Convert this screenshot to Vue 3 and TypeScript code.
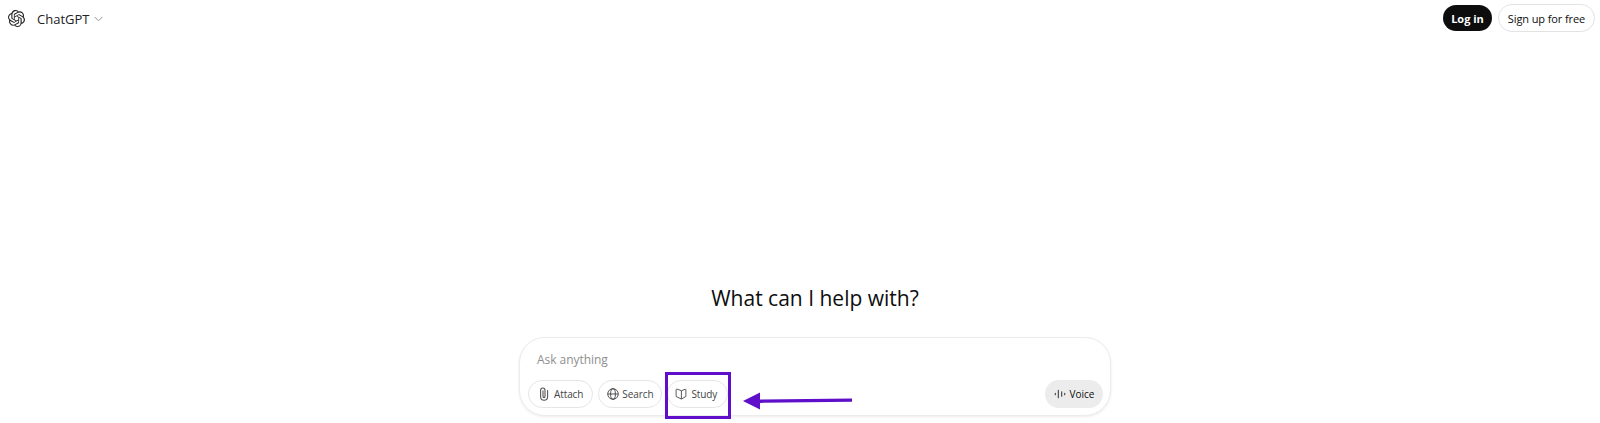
<script setup lang="ts">
const tools = ['Attach', 'Search', 'Study'] as const
</script>

<template>
  <div class="page">
    <header class="top">
      <div class="brand">
        <svg class="logo" width="17" height="17" viewBox="0 0 24 24" fill="#222"><path d="M22.28 9.82a5.98 5.98 0 0 0-.52-4.91 6.05 6.05 0 0 0-6.51-2.9A6.07 6.07 0 0 0 4.98 4.18a5.98 5.98 0 0 0-4 2.9 6.05 6.05 0 0 0 .74 7.1 5.98 5.98 0 0 0 .51 4.91 6.05 6.05 0 0 0 6.52 2.9A5.98 5.98 0 0 0 13.26 24a6.06 6.06 0 0 0 5.77-4.21 5.99 5.99 0 0 0 4-2.9 6.06 6.06 0 0 0-.75-7.07zM13.26 22.43a4.48 4.48 0 0 1-2.88-1.04l.14-.08 4.78-2.76a.79.79 0 0 0 .39-.68v-6.74l2.02 1.17a.07.07 0 0 1 .04.05v5.58a4.5 4.5 0 0 1-4.49 4.5zM3.6 18.3a4.47 4.47 0 0 1-.54-3.01l.14.09 4.78 2.76a.77.77 0 0 0 .78 0l5.84-3.37v2.33a.08.08 0 0 1-.03.06l-4.83 2.79a4.5 4.5 0 0 1-6.14-1.65zM2.34 7.9a4.49 4.49 0 0 1 2.37-1.97v5.67a.77.77 0 0 0 .39.68l5.81 3.35-2.02 1.17a.08.08 0 0 1-.07 0l-4.83-2.79A4.5 4.5 0 0 1 2.34 7.87zm16.6 3.86-5.84-3.39 2.02-1.16a.08.08 0 0 1 .07 0l4.83 2.79a4.49 4.49 0 0 1-.68 8.1v-5.67a.79.79 0 0 0-.4-.67zm2.01-3.02-.14-.09-4.77-2.78a.78.78 0 0 0-.79 0L9.41 9.23V6.9a.07.07 0 0 1 .03-.06l4.83-2.79a4.5 4.5 0 0 1 6.68 4.66zM8.31 12.86l-2.02-1.16a.08.08 0 0 1-.04-.06V6.07a4.5 4.5 0 0 1 7.38-3.45l-.14.08-4.78 2.76a.79.79 0 0 0-.39.68zm1.1-2.37 2.6-1.5 2.61 1.5v3l-2.6 1.5-2.61-1.5z"/></svg>
        <span class="name">ChatGPT</span>
        <svg class="chev" width="9" height="6" viewBox="0 0 10 6" fill="none" stroke="#8a8a8a" stroke-width="1"><path d="M.8.8 5 5l4.2-4.2"/></svg>
      </div>
      <div class="auth">
        <button class="login">Log in</button>
        <button class="signup">Sign up for free</button>
      </div>
    </header>

    <main class="main">
      <h1 class="title">What can I help with?</h1>
      <section class="composer">
        <div class="placeholder">Ask anything</div>
        <div class="row">
          <div class="tools">
            <button v-for="t in tools" :key="t" class="pill">
              <svg v-if="t === 'Attach'" width="14" height="14" viewBox="0 0 14 14" fill="none" stroke="#555" stroke-width="1.1" stroke-linecap="round"><path d="M10.6 3.6v6.2a3.5 3.5 0 0 1-7 0V3.2a2.2 2.2 0 0 1 4.4 0v6.4a1 1 0 0 1-2 0V3.8"/></svg>
              <svg v-else-if="t === 'Search'" width="12" height="12" viewBox="0 0 15 15" fill="none" stroke="#444" stroke-width="1.15"><circle cx="7.5" cy="7.5" r="6.6"/><ellipse cx="7.5" cy="7.5" rx="3" ry="6.6"/><path d="M.9 7.5h13.2"/></svg>
              <svg v-else width="12" height="12" viewBox="0 0 15 15" fill="none" stroke="#555" stroke-width="1.2" stroke-linejoin="round"><path d="M8 3.4 2.6 1.4c-.7-.2-1.2.2-1.2.9v8.3l6.6 3.2zM8 3.4l4.6-1.8c.6-.2 1-.1 1 .6v8.4L8 13.8"/></svg>
              <span>{{ t }}</span>
            </button>
          </div>
          <button class="voice">
            <svg width="12" height="12" viewBox="0 0 14 12" fill="none" stroke="#333" stroke-width="1.2" stroke-linecap="round"><path d="M1.5 5v2M5 1.5v9M9 3.5v5M12.5 5v2"/></svg>
            <span>Voice</span>
          </button>
        </div>
      </section>
    </main>

    <div class="mark"></div>
    <svg class="arrow" width="114" height="22" viewBox="0 0 114 22"><path d="M110 8.4 18 9.6V2.5L1 11 18 19.5v-6.6l92-1.2z" fill="#5f0fc9"/></svg>
  </div>
</template>

<style>
html, body { margin: 0; background: #fff; }
</style>

<style scoped>
.page {
  position: relative;
  width: 1600px;
  height: 423px;
  overflow: hidden;
  display: flex;
  flex-direction: column;
  font-family: "Open Sans", "Noto Sans", sans-serif;
  color: #0d0d0d;
  background: #fff;
}
.top {
  display: flex;
  justify-content: space-between;
  align-items: center;
  padding: 0 5px 0 8px;
  height: 36px;
}
.brand { display: flex; align-items: center; padding-top: 1px; }
.logo { margin-right: 12px; }
.name { font-size: 13px; color: #222; margin-right: 5px; }
.auth { display: flex; align-items: center; gap: 6px; }
button { font-family: inherit; cursor: pointer; }
.login {
  width: 49px;
  height: 26px;
  border: 0;
  padding: 0;
  border-radius: 13px;
  background: #0d0d0d;
  color: #fff;
  font-size: 11px;
  font-weight: 700;
}
.signup {
  width: 97px;
  height: 28px;
  padding: 0;
  border: 1px solid #e3e3e3;
  border-radius: 14px;
  background: #fff;
  color: #0d0d0d;
  font-size: 11px;
  font-weight: 500;
  letter-spacing: -.1px;
}
.main {
  flex: 1;
  display: flex;
  flex-direction: column;
  align-items: center;
  justify-content: flex-end;
  padding-bottom: 7px;
  padding-left: 30px;
}
.title {
  margin: 0 0 24px;
  font-size: 21px;
  font-weight: 400;
  line-height: 30px;
  color: #0d0d0d;
}
.composer {
  box-sizing: border-box;
  width: 592px;
  height: 79px;
  padding: 13px 7px 7px 8px;
  border: 1px solid #ececec;
  border-radius: 26px;
  box-shadow: 0 1px 3px rgba(0, 0, 0, .08);
  display: flex;
  flex-direction: column;
  justify-content: space-between;
  background: #fff;
}
.placeholder { font-size: 12px; line-height: 18px; color: #8f8f8f; padding-left: 9px; letter-spacing: -.05px; }
.row { display: flex; justify-content: space-between; align-items: center; }
.tools { display: flex; gap: 5px; }
.pill {
  height: 28px;
  padding: 0 8px;
  display: flex;
  align-items: center;
  gap: 3px;
  border: 1px solid #e6e6e6;
  border-radius: 14px;
  background: #fff;
  color: #444;
  font-size: 10px;
  font-weight: 500;
  letter-spacing: -.1px;
}
.pill:first-child { padding-right: 9px; }
.pill:last-child { gap: 4px; padding: 0 10px 0 7px; }
.voice {
  height: 28px;
  width: 58px;
  padding: 0;
  display: flex;
  align-items: center;
  justify-content: center;
  gap: 4px;
  border: 0;
  border-radius: 14px;
  background: #ececec;
  color: #0d0d0d;
  font-size: 10px;
  font-weight: 500;
}
.mark {
  position: absolute;
  left: 665px;
  top: 372px;
  width: 66px;
  height: 47px;
  box-sizing: border-box;
  border: 3px solid #5f0fc9;
}
.arrow {
  position: absolute;
  left: 742px;
  top: 390px;
}
</style>
